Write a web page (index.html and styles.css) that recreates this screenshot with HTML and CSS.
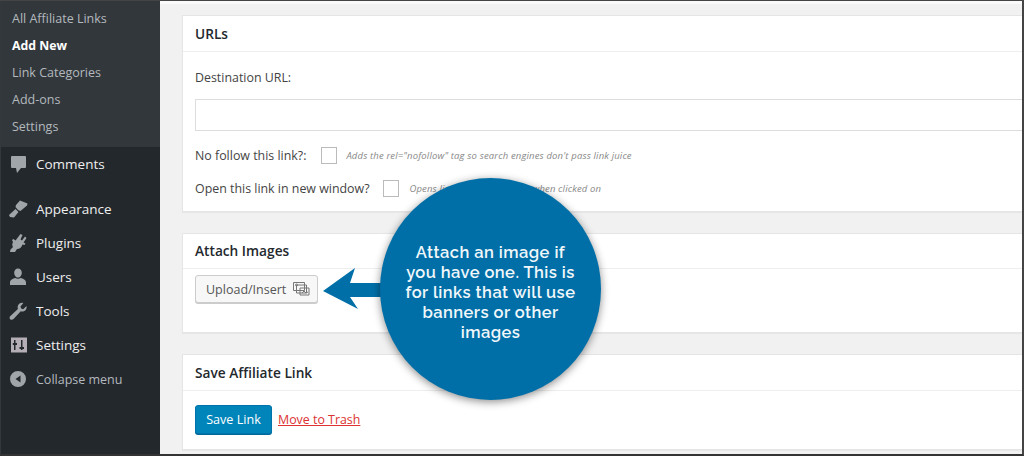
FILE: index.html
```html
<!DOCTYPE html>
<html lang="en">
<head>
<meta charset="utf-8">
<title>Add New Affiliate Link</title>
<link rel="stylesheet" href="styles.css">
</head>
<body>
<div class="frame">
  <nav class="sidebar">
    <ul class="submenu">
      <li>All Affiliate Links</li>
      <li class="current">Add New</li>
      <li>Link Categories</li>
      <li>Add-ons</li>
      <li>Settings</li>
    </ul>
    <ul class="menu menu-comments">
      <li><svg class="ico" viewBox="0 0 20 20"><path d="M4 2h13a1 1 0 0 1 1 1v10a1 1 0 0 1-1 1h-4l-4 5-1-5H4a1 1 0 0 1-1-1V3a1 1 0 0 1 1-1z"/></svg>Comments</li>
    </ul>
    <ul class="menu menu-main">
      <li><svg class="ico" viewBox="0 0 20 20"><path d="M12 1.500l7.500 3-.5 2-6.500 5.500-2.500-1-2.500-3 .5-2zM7.500 10l3 3-4.500 5.500-4-.5-1-2z"/></svg>Appearance</li>
      <li><svg class="ico" viewBox="0 0 20 20"><path d="M12.500 1l2 1-2 4.500 1.500 1L17 3.500l1.500 1.500-3 4.500 2 1-1 1.500-2-.5c-1 3-3 4.500-5.500 4.500L7 19H2l.5-2.500L5 14c-1-1.500-1-3 0-5l-1-2 1.500-1 2 1.500z"/></svg>Plugins</li>
      <li><svg class="ico" viewBox="0 0 20 20"><path d="M10 1.500c2.200 0 3.800 1.800 3.800 4.200S12.200 10.500 10 10.500 6.200 8.100 6.200 5.700 7.800 1.500 10 1.500zM2 15.500c0-2.700 3-3.800 5.300-4.500 1.700 1 3.700 1 5.400 0 2.300.7 5.300 1.800 5.300 4.500V18H2z"/></svg>Users</li>
      <li><svg class="ico" viewBox="0 0 20 20"><path d="M18.500 5c.5 2.300-.5 4.500-2.700 5.300-1.100.4-2.200.3-3-.1L5.500 18c-1 1-2.500 1-3.300.2-.9-.9-.8-2.200.2-3.200l7.500-7c-.4-1-.4-2.200 0-3.200C10.700 2.500 13 1.400 15.300 2L12.500 5.500l.7 2 2 .7z"/></svg>Tools</li>
      <li><svg class="ico" viewBox="0 0 20 20"><path class="tile" d="M3 2.500h16v15H3z"/><path class="tile-mark" d="M6 5h1.500v3H9v2H7.500v5H6v-5H4.800V8H6zM13 5h1.500v7H16v2h-1.500v1H13v-1h-1.500v-2H13z"/></svg>Settings</li>
      <li class="collapse"><svg class="ico" viewBox="0 0 20 20"><path fill-rule="evenodd" d="M10 2a8 8 0 1 1 0 16 8 8 0 0 1 0-16zM12.500 6.500L7.500 10l5 3.500z"/></svg>Collapse menu</li>
    </ul>
  </nav>
  <main class="content">
    <section class="panel panel-urls">
      <h2 class="panel-title">URLs</h2>
      <div class="panel-body">
        <label class="dest-label">Destination URL:</label>
        <input class="url-input" type="text">
        <div class="opt opt-first"><span>No follow this link?:</span><span class="check"></span><em>Adds the rel="nofollow" tag so search engines don't pass link juice</em></div>
        <div class="opt opt-second"><span>Open this link in new window?</span><span class="check"></span><em>Opens link in a new window when clicked on</em></div>
      </div>
    </section>
    <section class="panel panel-images">
      <h2 class="panel-title">Attach Images</h2>
      <div class="panel-body">
        <button class="btn-upload" type="button">Upload/Insert
          <svg class="media" viewBox="0 0 18 16" fill="none" stroke="#777" stroke-width="1"><path d="M.5 1.500h11v8H.5z"/><path d="M3.500 4h10v8h-10z"/><path d="M7 7h9v7H7z"/><circle cx="3.500" cy="4" r="1"/><path d="M9 12l2-2 2 2 2-1"/></svg>
        </button>
      </div>
    </section>
    <section class="panel panel-save">
      <h2 class="panel-title">Save Affiliate Link</h2>
      <div class="panel-body save-row">
        <button class="btn-save" type="button">Save Link</button>
        <a class="trash" href="#">Move to Trash</a>
      </div>
    </section>
    <svg class="arrow" viewBox="0 0 60 42"><path d="M0 23L32 0 27 15H60V29H27L35 41z"/></svg>
    <div class="bubble"><p>Attach an image if you have one. This is for links that will use banners or other images</p></div>
  </main>
</div>
</body>
</html>
```
FILE: styles.css
```css
* { box-sizing: border-box; }
html, body { margin: 0; padding: 0; }
body { width: 1024px; height: 456px; overflow: hidden; font-family: "Open Sans", "Noto Sans", sans-serif; background: #f1f1f1; }
.frame { display: flex; width: 1024px; height: 456px; border-top: 1px solid #444; border-bottom: 2px solid #333; border-right: 2px solid #444; overflow: hidden; }
.sidebar { width: 160px; flex: none; background: #23282d; color: #eee; border-left: 1px solid #33383d; }
ul { list-style: none; margin: 0; padding: 0; }
.submenu { background: #32373c; height: 146px; padding-top: 4px; }
.submenu li { height: 27px; line-height: 27px; padding-left: 11px; font-size: 12.500px; color: #b4b9be; }
.submenu .current { color: #fff; font-weight: 700; font-size: 12.300px; }
.menu li { display: flex; align-items: center; height: 34px; font-size: 13.500px; color: #eee; }
.menu-main { padding-top: 11px; }
.ico { width: 20px; height: 20px; margin: 0 8px 0 7px; fill: #a0a5aa; flex: none; }
.tile { fill: #b5aeb6; }
.tile-mark { fill: #23282d; }
.collapse { color: #b4b9be !important; font-size: 12.500px !important; }
.content { position: relative; flex: 1; min-width: 0; padding: 0 0 0 22px; background: linear-gradient(#fafafa 3px, #f1f1f1 3px); }
.panel { background: #fff; border: 1px solid #e5e5e5; border-right: 0; box-shadow: 0 1px 1px rgba(0,0,0,.04); }
.panel-title { margin: 0; font-size: 13.700px; font-weight: 600; color: #23282d; line-height: 20px; padding: 8px 12px 0; border-bottom: 1px solid #eee; }
.panel-urls { height: 197px; margin-top: 14px; }
.panel-urls .panel-title { height: 36px; }
.panel-body { padding: 0 0 0 12px; font-size: 12.400px; color: #444; }
.dest-label { display: block; padding-top: 17px; line-height: 18px; }
.url-input { display: block; width: 100%; height: 32px; margin-top: 12px; border: 1px solid #ddd; border-right: 0; background: #fff; }
.opt { display: flex; align-items: center; height: 18px; margin-top: 15px; }
.check { width: 16px; height: 17px; border: 1px solid #bbb; margin: 0 9px 0 15px; flex: none; background: #fff; }
.opt-second .check { margin: 0 10px 0 14px; }
.opt em { font-size: 9.500px; color: #888; letter-spacing: .15px; }
.panel-images { height: 100px; margin-top: 21px; }
.panel-images .panel-title { height: 35px; padding-top: 7px; }
.panel-images .panel-body { padding-top: 6px; }
.btn-upload { display: flex; align-items: center; gap: 7px; width: 123px; height: 28px; padding: 0 10px; background: #f7f7f7; border: 1px solid #ccc; border-radius: 3px; box-shadow: 0 1px 0 #ccc; color: #555; font: 12.500px "Open Sans", sans-serif; white-space: nowrap; }
.media { width: 18px; height: 16px; flex: none; }
.panel-save { height: 96px; margin-top: 21px; }
.panel-save .panel-title { height: 36px; padding-top: 8px; }
.save-row { display: flex; align-items: center; gap: 6px; padding-top: 14px; }
.btn-save { width: 77px; height: 29px; padding: 0; background: #0085ba; border: 1px solid #0073aa; border-radius: 3px; color: #fff; font: 12.600px "Open Sans", sans-serif; box-shadow: 0 1px 0 #006799; }
.trash { color: #dc3232; font-size: 12.400px; }
.arrow { position: absolute; left: 163px; top: 267px; width: 60px; height: 42px; fill: #006fa8; }
.bubble { position: absolute; left: 220px; top: 177px; width: 221px; height: 222px; border-radius: 50%; background: #006fa8; box-shadow: 0 2px 8px rgba(0,0,0,.45); display: flex; justify-content: center; padding-top: 64px; }
.bubble p { margin: 0; width: 176px; text-align: center; font: 600 16.500px/20px Raleway, Lato, sans-serif; letter-spacing: .45px; color: #f2f7fa; }
```
